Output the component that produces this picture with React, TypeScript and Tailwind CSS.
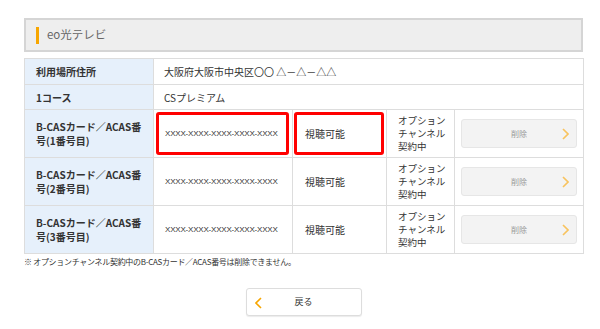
import React from "react";

const font = { fontFamily: '"Noto Sans CJK JP", "Liberation Sans", sans-serif' };

function ChevronRight({ color }: { color: string }) {
  return (
    <svg width="7" height="12" viewBox="0 0 7 12">
      <path d="M1 1 L6 6 L1 11" fill="none" stroke={color} strokeWidth="1.6" />
    </svg>
  );
}
function ChevronLeft({ color }: { color: string }) {
  return (
    <svg width="7" height="12" viewBox="0 0 7 12">
      <path d="M6 1 L1 6 L6 11" fill="none" stroke={color} strokeWidth="1.6" />
    </svg>
  );
}

function CardRow({ n, highlight }: { n: number; highlight?: boolean }) {
  return (
    <tr className="h-[48px]">
      <td className="border border-[#dddddd] bg-[#e6f0fb] pl-[11px] font-bold text-[10px] leading-[14px] text-[#333]">
        B-CASカード／ACAS番
        <br />
        号(
        {n}番号目)
      </td>
      <td className="relative border border-[#dddddd] pl-[11px] text-[8px] tracking-[-0.2px] text-[#333]" style={{ fontFamily: '"Liberation Sans", sans-serif' }}>
        {highlight && (
          <div className="absolute left-[2px] right-[3px] top-[2px] bottom-[2px] border-[3px] border-[#ff0000] rounded-[3px]" />
        )}
        XXXX-XXXX-XXXX-XXXX-XXXX
      </td>
      <td className="relative border border-[#dddddd] pl-[12px] text-[10px] text-[#333]">
        {highlight && (
          <div className="absolute left-[1px] right-[2px] top-[2px] bottom-[2px] border-[3px] border-[#ff0000] rounded-[3px]" />
        )}
        視聴可能
      </td>
      <td className="border border-[#dddddd] pl-[11px] text-[9.5px] leading-[13px] text-[#333]">
        <div>オプション</div>
        <div>チャンネル</div>
        <div>契約中</div>
      </td>
      <td className="border border-[#dddddd] px-[6px]">
        <div className="flex items-center h-[29px] bg-[#f3f3f3] border border-[#e6e6e6] rounded-[3px] relative">
          <span className="flex-1 text-center text-[8px] text-[#999]">削除</span>
          <span className="absolute right-[7px] top-[8px]">
            <ChevronRight color="#f8c35e" />
          </span>
        </div>
      </td>
    </tr>
  );
}

export default function App() {
  return (
    <div className="w-[600px] h-[329px] bg-white pt-[18px] pl-[24px]" style={font}>
      <div className="w-[559px]">
        <div className="w-[559px] h-[34px] bg-[#eeeeee] border-2 border-[#d5d5d5] flex items-center pl-[10px]">
          <div className="w-[3px] h-[17px] bg-[#f7a600]" />
          <span className="ml-[8px] text-[11.5px] text-[#666]">eo光テレビ</span>
        </div>
        <table className="mt-[6px] w-[559px] table-fixed border-collapse">
          <colgroup>
            <col className="w-[129px]" />
            <col className="w-[139px]" />
            <col className="w-[94px]" />
            <col className="w-[68px]" />
            <col className="w-[129px]" />
          </colgroup>
          <tbody>
            <tr className="h-[26px]">
              <td className="border border-[#dddddd] bg-[#e6f0fb] pl-[11px] font-bold text-[10px] text-[#333]">利用場所住所</td>
              <td colSpan={4} className="border border-[#dddddd] pl-[10px] text-[10px] text-[#333]">
                大阪府大阪市中央区〇〇 △－△－△△
              </td>
            </tr>
            <tr className="h-[25px]">
              <td className="border border-[#dddddd] bg-[#e6f0fb] pl-[11px] font-bold text-[10px] text-[#333]">1コース</td>
              <td colSpan={4} className="border border-[#dddddd] pl-[10px] text-[10px] text-[#333]">
                CSプレミアム
              </td>
            </tr>
            <CardRow n={1} highlight />
            <CardRow n={2} />
            <CardRow n={3} />
          </tbody>
        </table>
        <p className="mt-[2px] text-[8px] tracking-[-0.3px] text-[#333]">
          ※ オプションチャンネル契約中のB-CASカード／ACAS番号は削除できません。
        </p>
        <div className="flex justify-center mt-[20px]">
          <div className="relative w-[116px] h-[28px] border border-[#dddddd] rounded-[3px] bg-white shadow-[0_1px_1px_rgba(0,0,0,0.08)] flex items-center justify-center">
            <span className="absolute left-[8px] top-[8px]">
              <ChevronLeft color="#f7a600" />
            </span>
            <span className="text-[9px] text-[#333]">戻る</span>
          </div>
        </div>
      </div>
    </div>
  );
}
